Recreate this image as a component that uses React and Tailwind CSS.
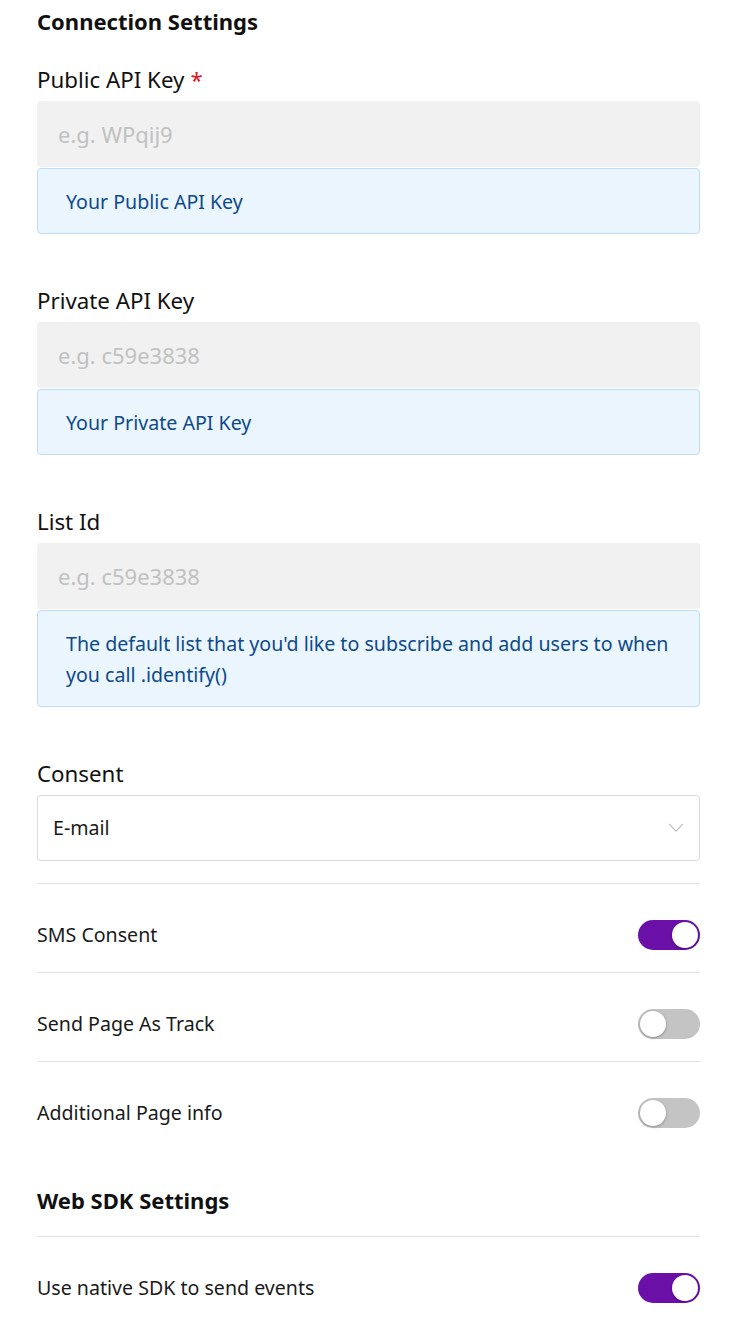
const FIELDS = [
  { label: 'Public API Key', required: true, placeholder: 'e.g. WPqij9', help: 'Your Public API Key' },
  { label: 'Private API Key', placeholder: 'e.g. c59e3838', help: 'Your Private API Key' },
  { label: 'List Id', placeholder: 'e.g. c59e3838', help: "The default list that you'd like to subscribe and add users to when you call .identify()" },
]

function Toggle({ on }) {
  return (
    <div className={`relative w-[62px] h-[30px] rounded-full ${on ? 'bg-[#6a0fa8]' : 'bg-[#c4c4c4]'}`}>
      <span
        className={`absolute top-[2px] w-[26px] h-[26px] bg-white rounded-full shadow-[0_1px_3px_rgba(0,0,0,0.3)] ${on ? 'right-[2px]' : 'left-[2px]'}`}
      />
    </div>
  )
}

function ToggleRow({ label, on }) {
  return (
    <div className="border-t border-[#e2e2e2] pt-[36px] pb-[22px] flex items-center justify-between">
      <span className="text-[19.6px] leading-[30px] text-[#1a1a1a]">{label}</span>
      <Toggle on={on} />
    </div>
  )
}

export default function App() {
  return (
    <div className="w-[738px] bg-white pl-[37px] pr-[38px] pt-[6px] pb-10 font-['Noto_Sans',sans-serif] text-[#111]">
      <h2 className="text-[22px] leading-[30px] font-bold">Connection Settings</h2>

      {FIELDS.map((f, i) => (
        <div key={f.label} className={i === 0 ? 'mt-[29px]' : 'mt-[52px]'}>
          <label className="block text-[22.3px] leading-[30px]">
            {f.label}
            {f.required && <span className="text-[#e5141c] ml-1.5">*</span>}
          </label>
          <div className="mt-[6px] h-[66px] rounded bg-[#f1f1f1] flex items-center px-[21px] text-[22px] text-[#c1c1c1]">
            {f.placeholder}
          </div>
          <div className="mt-px rounded border border-[#bcdcfa] bg-[#ebf5fe] px-[28px] py-[16.5px] text-[19.6px] leading-[31px] text-[#0d4a8a]">
            {f.help}
          </div>
        </div>
      ))}

      <div className="mt-[52px]">
        <label className="block text-[22.3px] leading-[30px]">Consent</label>
        <div className="mt-[6px] h-[66px] rounded border border-[#dcdcdc] flex items-center justify-between pl-[15px] pr-[15px] text-[19.6px] text-[#1a1a1a]">
          <span>E-mail</span>
          <svg width="16" height="10" viewBox="0 0 16 10" fill="none" stroke="#c4c4c4" strokeWidth="1.3">
            <path d="M1 1l7 7 7-7" />
          </svg>
        </div>
      </div>

      <div className="mt-[22px]">
        <ToggleRow label="SMS Consent" on />
        <ToggleRow label="Send Page As Track" />
        <ToggleRow label="Additional Page info" />
      </div>

      <h2 className="mt-[35px] text-[22px] leading-[30px] font-bold">Web SDK Settings</h2>
      <div className="mt-[21px]">
        <ToggleRow label="Use native SDK to send events" on />
      </div>
    </div>
  )
}
